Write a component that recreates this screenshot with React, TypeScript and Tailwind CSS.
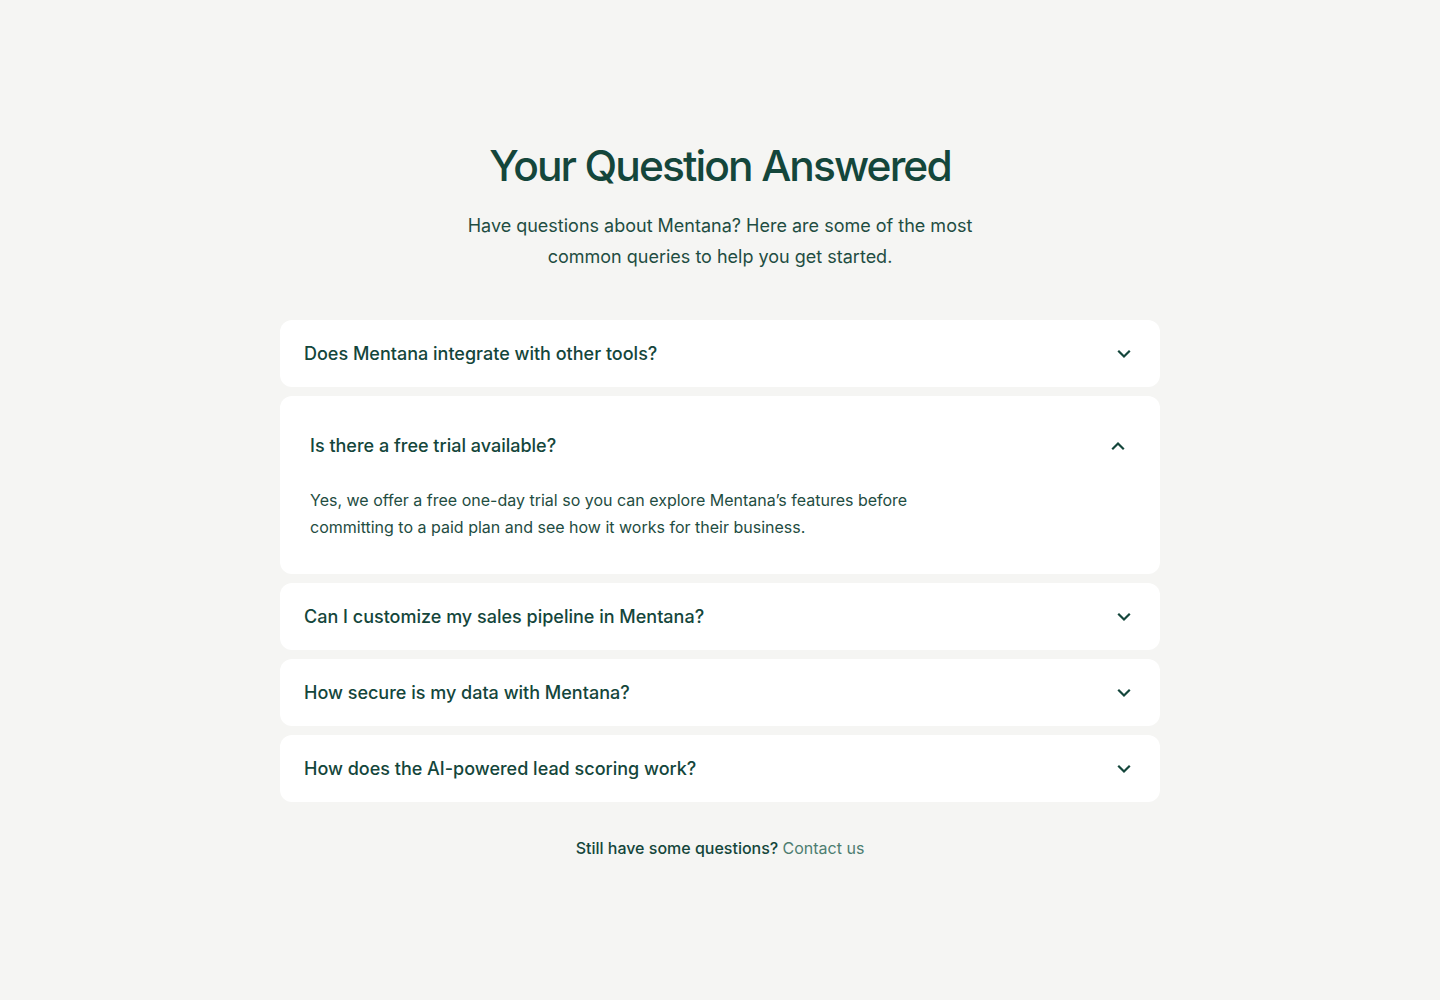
import React, { useState } from 'react'

const faqs = [
  { q: 'Does Mentana integrate with other tools?', a: 'Yes, Mentana connects with the tools your team already uses, including email, calendars and popular productivity apps.' },
  { q: 'Is there a free trial available?', a: 'Yes, we offer a free one-day trial so you can explore Mentana’s features before committing to a paid plan and see how it works for their business.' },
  { q: 'Can I customize my sales pipeline in Mentana?', a: 'Absolutely. You can add, rename and reorder stages to match the way your team sells.' },
  { q: 'How secure is my data with Mentana?', a: 'Your data is encrypted in transit and at rest, and access is controlled with role-based permissions.' },
  { q: 'How does the AI-powered lead scoring work?', a: 'Mentana looks at engagement and deal history to rank leads by how likely they are to convert.' },
]

function Chevron({ up }: { up?: boolean }) {
  return (
    <svg width="24" height="24" viewBox="0 0 24 24" fill="none" stroke="currentColor" strokeWidth="2.2" strokeLinecap="square" strokeLinejoin="miter">
      {up ? <path d="M7 14.5l5-5 5 5" /> : <path d="M7 9.5l5 5 5-5" />}
    </svg>
  )
}

export default function App() {
  const [open, setOpen] = useState<number | null>(1)

  return (
    <div className="min-h-[1000px] bg-[#f5f5f3] text-[#14463b]" style={{ fontFamily: 'Inter, "Noto Sans", sans-serif' }}>
      <div className="mx-auto flex w-[880px] flex-col items-center pt-[140px]">
        <h1 className="text-[42.5px] font-medium leading-[52px] tracking-[-0.045em]">Your Question Answered</h1>
        <p className="mt-[18px] w-[520px] text-center text-[18px] leading-[31px] text-[#1f4d42]">
          Have questions about Mentana? Here are some of the most common queries to help you get started.
        </p>

        <div className="mt-[48px] flex w-full flex-col gap-[9px]">
          {faqs.map((f, i) => {
            const isOpen = open === i
            return (
              <div key={f.q} className="rounded-[12px] bg-white">
                {isOpen ? (
                  <div className="px-[30px] pt-[36px] pb-[33px]">
                    <button onClick={() => setOpen(null)} className="flex w-full items-center justify-between text-left">
                      <span className="text-[18px] font-medium leading-[28px]">{f.q}</span>
                      <Chevron up />
                    </button>
                    <p className="mt-[27px] w-[610px] text-[16px] leading-[27px] text-[#1f4d42]">{f.a}</p>
                  </div>
                ) : (
                  <button onClick={() => setOpen(i)} className="flex h-[67px] w-full items-center justify-between px-[24px] text-left">
                    <span className="text-[18px] font-medium leading-[28px]">{f.q}</span>
                    <Chevron />
                  </button>
                )}
              </div>
            )
          })}
        </div>

        <p className="mt-[34px] text-[16px] font-medium leading-[24px]">
          Still have some questions? <a href="#" className="font-normal text-[#4d7d70]">Contact us</a>
        </p>
      </div>
    </div>
  )
}
